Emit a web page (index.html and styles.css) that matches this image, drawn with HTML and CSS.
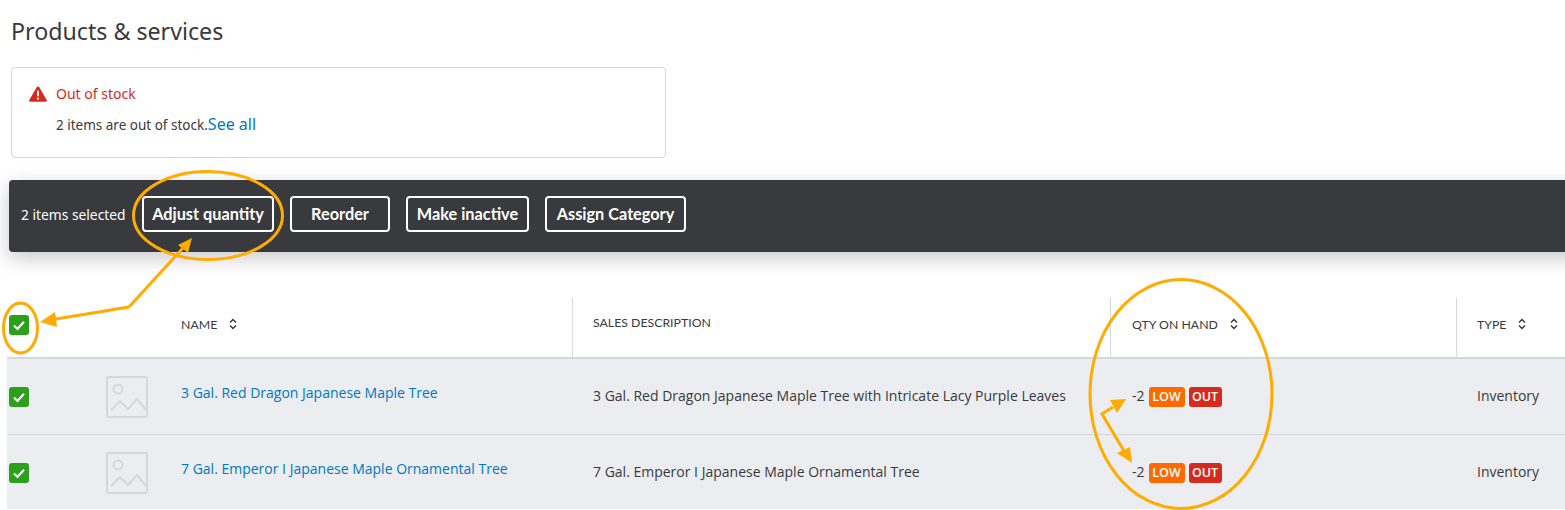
FILE: index.html
```html
<!DOCTYPE html>
<html lang="en">
<head>
<meta charset="utf-8">
<title>Products &amp; services</title>
<link rel="stylesheet" href="styles.css">
</head>
<body>
<main class="page">
  <h1 class="title">Products &amp; services</h1>
  <section class="alert">
    <div class="alert-head">
      <svg class="warn" viewBox="0 0 18 16" aria-hidden="true"><path d="M9 .4c.5 0 1 .3 1.200.7l7.500 12.900c.5.900-.1 1.800-1.100 1.800H1.400C.4 15.800-.2 14.900.3 14L7.800 1.100C8 .7 8.500.4 9 .4z" fill="#d52b1e"/><rect x="8" y="4.500" width="2" height="6" rx="1" fill="#fff"/><circle cx="9" cy="12.600" r="1.150" fill="#fff"/></svg>
      <span class="alert-title">Out of stock</span>
    </div>
    <p class="alert-body">2 items are out of stock.<a class="see-all" href="#">See all</a></p>
  </section>
  <div class="bar">
    <span class="bar-count">2 items selected</span>
    <button class="bar-btn btn-adjust">Adjust quantity</button>
    <button class="bar-btn btn-reorder">Reorder</button>
    <button class="bar-btn btn-inactive">Make inactive</button>
    <button class="bar-btn btn-assign">Assign Category</button>
  </div>
  <div class="table">
    <div class="row head">
      <div class="cell c-check"><span class="check"><svg viewBox="0 0 20 20"><path d="M5 10.500l3.500 3.500L15 6.800" /></svg></span></div>
      <div class="cell c-img"></div>
      <div class="cell c-name">NAME <svg class="sort" viewBox="0 0 8 12"><path d="M1 4.500L4 1.500l3 3M1 7.500l3 3 3-3"/></svg></div>
      <div class="cell c-desc sep"><span class="desc-label">SALES DESCRIPTION</span></div>
      <div class="cell c-qty sep">QTY ON HAND <svg class="sort" viewBox="0 0 8 12"><path d="M1 4.500L4 1.500l3 3M1 7.500l3 3 3-3"/></svg></div>
      <div class="cell c-type sep">TYPE <svg class="sort" viewBox="0 0 8 12"><path d="M1 4.500L4 1.500l3 3M1 7.500l3 3 3-3"/></svg></div>
    </div>
    <div class="row item">
      <div class="cell c-check"><span class="check"><svg viewBox="0 0 20 20"><path d="M5 10.500l3.500 3.500L15 6.800" /></svg></span></div>
      <div class="cell c-img"><svg class="thumb" viewBox="0 0 42 42"><rect x="1" y="1" width="40" height="40" rx="2"/><circle cx="12" cy="13" r="4.500"/><path d="M5 34l9-9 8 8 9-10 9 11"/></svg></div>
      <div class="cell c-name"><a class="item-link" href="#">3 Gal. Red Dragon Japanese Maple Tree</a></div>
      <div class="cell c-desc">3 Gal. Red Dragon Japanese Maple Tree with Intricate Lacy Purple Leaves</div>
      <div class="cell c-qty"><span class="qty-num">-2</span><span class="tag low">LOW</span><span class="tag out">OUT</span></div>
      <div class="cell c-type">Inventory</div>
    </div>
    <div class="row item">
      <div class="cell c-check"><span class="check"><svg viewBox="0 0 20 20"><path d="M5 10.500l3.500 3.500L15 6.800" /></svg></span></div>
      <div class="cell c-img"><svg class="thumb" viewBox="0 0 42 42"><rect x="1" y="1" width="40" height="40" rx="2"/><circle cx="12" cy="13" r="4.500"/><path d="M5 34l9-9 8 8 9-10 9 11"/></svg></div>
      <div class="cell c-name"><a class="item-link" href="#">7 Gal. Emperor I Japanese Maple Ornamental Tree</a></div>
      <div class="cell c-desc">7 Gal. Emperor I Japanese Maple Ornamental Tree</div>
      <div class="cell c-qty"><span class="qty-num">-2</span><span class="tag low">LOW</span><span class="tag out">OUT</span></div>
      <div class="cell c-type">Inventory</div>
    </div>
  </div>
  <svg class="notes" viewBox="0 0 1565 510" aria-hidden="true">
    <ellipse cx="208" cy="215.500" rx="74.500" ry="44"/>
    <ellipse cx="20.500" cy="328" rx="17" ry="25"/>
    <ellipse cx="1181" cy="394" rx="91" ry="114.500"/>
    <path d="M129 307L183 248M129 307L50 320"/>
    <path d="M1113 407L1102 414L1124 451"/>
    <polygon class="fill" points="192,238 178,245 188,253"/>
    <polygon class="fill" points="40,322 55,312 57,327"/>
    <polygon class="fill" points="1126,399 1110,400 1117,413"/>
    <polygon class="fill" points="1132,463 1117,453 1130,447"/>
  </svg>
</main>
</body>
</html>
```
FILE: styles.css
```css
* { box-sizing: border-box; }
html, body { margin: 0; padding: 0; background: #fff; }
body { width: 1565px; height: 510px; overflow: hidden; font-family: "Open Sans", "Liberation Sans", sans-serif; color: #393a3d; }
.page { position: relative; width: 1565px; height: 510px; overflow: hidden; display: flex; flex-direction: column; }

.title { margin: 18px 0 0 11px; height: 49px; flex: none; font-family: "Noto Sans", sans-serif; font-size: 23.200px; line-height: 27px; font-weight: 400; color: #393a3d; }

.alert { margin-left: 11px; width: 655px; height: 91px; border: 1px solid #d4d7dc; border-radius: 4px; padding: 9px 17px 10px; flex: none; }
.alert-head { display: flex; align-items: center; gap: 9px; height: 32px; }
.warn { width: 18px; height: 16px; margin-top: 1px; }
.alert-title { font-family: "Noto Sans", sans-serif; font-size: 14px; color: #d52b1e; }
.alert-body { margin: 2px 0 0 27px; font-size: 13.500px; line-height: 26px; height: 26px; font-family: "Noto Sans", sans-serif; white-space: nowrap; }
.see-all { color: #0077c5; text-decoration: none; font-size: 16px; }

.bar { margin: 22px 0 0 9px; width: 1580px; height: 72px; background: #393a3d; border-radius: 4px; box-shadow: 0 6px 20px rgba(0,0,0,.22); display: flex; align-items: center; padding: 0 0 4px 12px; color: #fff; flex: none; }
.bar-count { font-family: "Noto Sans", sans-serif; font-size: 13.800px; width: 121px; margin-top: 1px; white-space: nowrap; }
.bar-btn { height: 36px; background: transparent; border: 2px solid #fff; border-radius: 4px; color: #fff; font-family: "Lato", sans-serif; font-weight: 700; font-size: 16.300px; padding: 0 0 2px; }
.btn-adjust { width: 132px; }
.btn-reorder { width: 100px; margin-left: 16px; }
.btn-inactive { width: 123px; margin-left: 16px; }
.btn-assign { width: 141px; margin-left: 16px; }

.table { margin: 46px 0 0 7px; height: 211px; overflow: hidden; flex: none; }
.row { display: grid; grid-template-columns: 87px 80px 398px 538px 346px 1fr; }
.head { height: 61px; border-bottom: 2px solid #d4d7dc; }
.item { height: 76px; background: #ebedf0; border-bottom: 1px solid #d4d7dc; font-size: 14px; }
.cell { display: flex; align-items: center; white-space: nowrap; }
.head .cell { font-family: "Lato", sans-serif; font-size: 12.300px; padding-bottom: 7px; color: #393a3d; }
.c-check { padding-left: 2px; }
.head .c-check { padding-bottom: 5px; }
.item .c-check { padding-top: 1px; }
.c-img { padding-left: 12px; }
.c-name { padding-left: 7px; }
.c-desc { padding-left: 21px; }
.c-qty { padding-left: 22px; }
.c-type { padding-left: 21px; }
.item .c-desc, .item .c-type { padding-bottom: 2px; }
.qty-num { margin-top: -2px; }
.head .sep { border-left: 1px solid #d4d7dc; }
.head .c-qty { padding-left: 21px; }
.head .c-type { padding-left: 20px; }
.head .c-desc { padding-left: 20px; }
.desc-label { margin-top: -3px; }
.sort { width: 8px; height: 12px; margin-left: 12px; fill: none; stroke: #393a3d; stroke-width: 1.500; }
.check { width: 20px; height: 20px; border-radius: 3px; background: #2ca01c; display: flex; }
.check svg { width: 20px; height: 20px; fill: none; stroke: #fff; stroke-width: 2.200; }
.thumb { width: 42px; height: 42px; fill: none; stroke: #d4d7dc; stroke-width: 2; }
.item-link { color: #0077c5; text-decoration: none; margin-top: -8px; }
.tag { display: inline-flex; justify-content: center; align-items: center; height: 20px; border-radius: 3px; color: #fff; font-size: 12.500px; font-weight: 600; }
.low { width: 36px; background: #ff6a00; margin-left: 4px; }
.out { width: 33px; background: #d52b1e; margin-left: 4px; }

.notes { position: absolute; left: 0; top: 0; width: 1565px; height: 510px; fill: none; stroke: #ffab00; stroke-width: 3; pointer-events: none; }
.notes .fill { fill: #ffab00; stroke: none; }
```
